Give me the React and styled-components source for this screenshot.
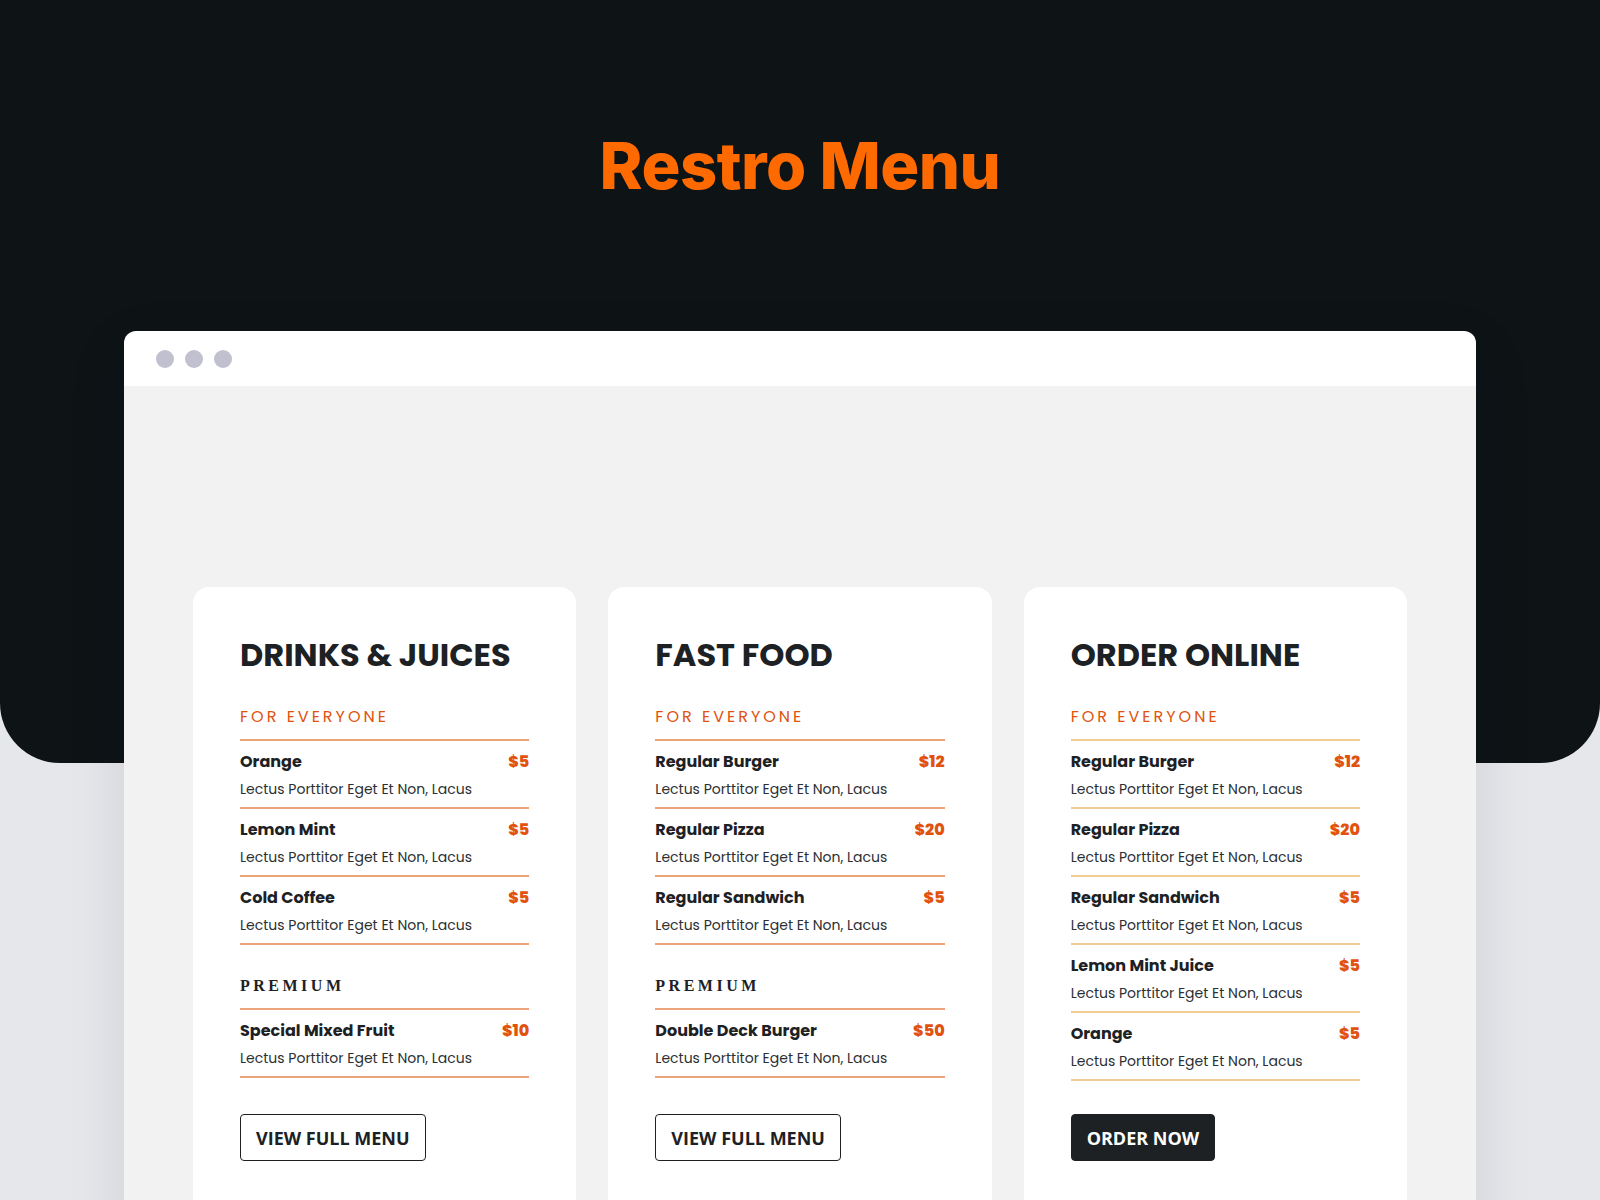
import React from 'react';
import styled, { createGlobalStyle } from 'styled-components';

const GlobalStyle = createGlobalStyle`
  html, body {
    margin: 0;
    padding: 0;
    background: #e6e7eb;
  }
  * {
    box-sizing: border-box;
  }
`;

const menus = [
  {
    title: 'DRINKS & JUICES',
    line: '#eea47b',
    button: 'VIEW FULL MENU',
    dark: false,
    sections: [
      {
        name: 'FOR EVERYONE',
        accent: true,
        items: [
          { name: 'Orange', price: '$5' },
          { name: 'Lemon Mint', price: '$5' },
          { name: 'Cold Coffee', price: '$5' },
        ],
      },
      {
        name: 'PREMIUM',
        accent: false,
        items: [{ name: 'Special Mixed Fruit', price: '$10' }],
      },
    ],
  },
  {
    title: 'FAST FOOD',
    line: '#eea47b',
    button: 'VIEW FULL MENU',
    dark: false,
    sections: [
      {
        name: 'FOR EVERYONE',
        accent: true,
        items: [
          { name: 'Regular Burger', price: '$12' },
          { name: 'Regular Pizza', price: '$20' },
          { name: 'Regular Sandwich', price: '$5' },
        ],
      },
      {
        name: 'PREMIUM',
        accent: false,
        items: [{ name: 'Double Deck Burger', price: '$50' }],
      },
    ],
  },
  {
    title: 'ORDER ONLINE',
    line: '#f0cb94',
    button: 'ORDER NOW',
    dark: true,
    sections: [
      {
        name: 'FOR EVERYONE',
        accent: true,
        items: [
          { name: 'Regular Burger', price: '$12' },
          { name: 'Regular Pizza', price: '$20' },
          { name: 'Regular Sandwich', price: '$5' },
          { name: 'Lemon Mint Juice', price: '$5' },
          { name: 'Orange', price: '$5' },
        ],
      },
    ],
  },
];

const desc = 'Lectus Porttitor Eget Et Non, Lacus';

const App = () => (
  <>
    <GlobalStyle />
    <Stage>
      <Title>Restro Menu</Title>
      <Browser>
        <BrowserBar>
          <Dot />
          <Dot />
          <Dot />
        </BrowserBar>
        <BrowserBody>
          {menus.map((menu) => (
            <Card key={menu.title}>
              <CardTitle>{menu.title}</CardTitle>
              {menu.sections.map((section) => (
                <Section key={section.name}>
                  <SectionName $accent={section.accent} $line={menu.line}>
                    {section.name}
                  </SectionName>
                  {section.items.map((item) => (
                    <Item key={item.name} $line={menu.line}>
                      <ItemHead>
                        <ItemName>{item.name}</ItemName>
                        <Price>{item.price}</Price>
                      </ItemHead>
                      <ItemDesc>{desc}</ItemDesc>
                    </Item>
                  ))}
                </Section>
              ))}
              <ButtonRow>
                <Button $dark={menu.dark}>{menu.button}</Button>
              </ButtonRow>
            </Card>
          ))}
        </BrowserBody>
      </Browser>
    </Stage>
  </>
);

const Stage = styled.div`
  position: relative;
  padding: 0 124px;
  overflow: hidden;
  &::before {
    content: '';
    position: absolute;
    top: 0;
    left: 0;
    right: 0;
    height: 763px;
    background: #0e1316;
    border-radius: 0 0 60px 60px;
  }
`;

const Title = styled.h1`
  position: relative;
  margin: 0;
  padding: 127px 0 0;
  height: 331px;
  text-align: center;
  font-family: Inter, 'Liberation Sans', sans-serif;
  font-weight: 800;
  font-size: 65px;
  line-height: 1.2;
  letter-spacing: -0.5px;
  color: #ff6a00;
`;

const Browser = styled.div`
  position: relative;
  border-radius: 12px 12px 0 0;
  overflow: hidden;
  box-shadow: 0 20px 60px rgba(20, 24, 40, 0.1);
`;

const BrowserBar = styled.div`
  display: flex;
  align-items: center;
  gap: 11px;
  height: 55px;
  padding: 0 32px;
  background: #ffffff;
`;

const Dot = styled.span`
  width: 18px;
  height: 18px;
  border-radius: 50%;
  background: #c0c0cf;
`;

const BrowserBody = styled.div`
  display: grid;
  grid-template-columns: repeat(3, 1fr);
  gap: 32px;
  padding: 201px 69px 80px;
  background: #f2f2f2;
`;

const Card = styled.div`
  display: flex;
  flex-direction: column;
  background: #ffffff;
  border-radius: 16px;
  padding: 48px 47px 60px;
`;

const CardTitle = styled.h2`
  margin: 0 0 32px;
  font-family: Poppins, Inter, 'Liberation Sans', sans-serif;
  font-weight: 700;
  font-size: 32px;
  line-height: 40px;
  color: #1d2124;
`;

const Section = styled.div`
  & + & {
    margin-top: 31px;
  }
`;

const SectionName = styled.div`
  padding-bottom: 12px;
  border-bottom: 2px solid ${(p) => p.$line};
  font-family: ${(p) =>
    p.$accent
      ? "Poppins, Inter, 'Liberation Sans', sans-serif"
      : "'Liberation Serif', 'DejaVu Serif', serif"};
  font-weight: ${(p) => (p.$accent ? 400 : 700)};
  font-size: 16px;
  line-height: 20px;
  letter-spacing: ${(p) => (p.$accent ? '3px' : '3.5px')};
  color: ${(p) => (p.$accent ? '#e0530f' : '#1d2124')};
`;

const Item = styled.div`
  padding: 10px 0 8px;
  border-bottom: 2px solid ${(p) => p.$line};
`;

const ItemHead = styled.div`
  display: flex;
  justify-content: space-between;
  align-items: baseline;
`;

const ItemName = styled.span`
  font-family: Poppins, Inter, 'Liberation Sans', sans-serif;
  font-weight: 700;
  font-size: 16px;
  line-height: 22px;
  color: #1d2124;
`;

const Price = styled.span`
  font-family: Poppins, Inter, 'Liberation Sans', sans-serif;
  font-weight: 800;
  font-size: 16px;
  line-height: 22px;
  color: #e0520e;
`;

const ItemDesc = styled.div`
  margin-top: 6px;
  font-family: Poppins, Inter, 'Liberation Sans', sans-serif;
  font-weight: 400;
  font-size: 14px;
  line-height: 20px;
  color: #2b2f33;
`;

const ButtonRow = styled.div`
  margin-top: auto;
  padding-top: 33px;
`;

const Button = styled.button`
  height: 47px;
  padding: 0 15px;
  border: 1.5px solid #1d2124;
  border-radius: 4px;
  background: ${(p) => (p.$dark ? '#1d2124' : '#ffffff')};
  color: ${(p) => (p.$dark ? '#ffffff' : '#1d2124')};
  font-family: 'Open Sans', 'Liberation Sans', sans-serif;
  font-weight: 700;
  font-size: 18px;
  letter-spacing: 0;
  cursor: pointer;
`;

export default App;
